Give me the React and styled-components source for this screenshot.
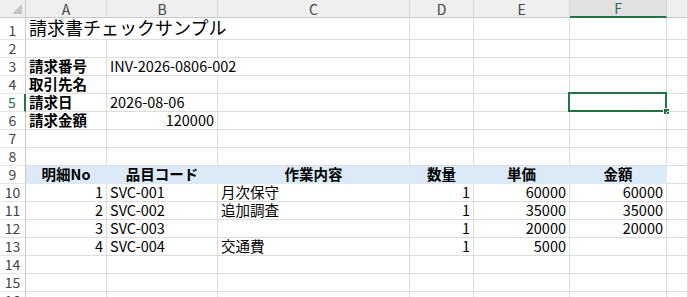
import React from 'react'
import styled, { createGlobalStyle, css } from 'styled-components'

const GlobalStyle = createGlobalStyle`
  html, body {
    margin: 0;
    padding: 0;
    background: #fff;
    overflow: hidden;
  }
  body {
    font-family: "Noto Sans CJK JP", "Noto Sans", sans-serif;
  }
`

const GREEN = '#217346'
const GRID = '#dcdcdc'

const columns = ['A', 'B', 'C', 'D', 'E', 'F', '']
const activeCol = 'F'
const activeRow = 5

// each row: height + cells for A..G, { t: text, r: right, c: center, b: bold, span, big }
const rows = [
  { n: 1, h: 22, cells: [{ t: '請求書チェックサンプル', span: 3, big: true }] },
  { n: 2 },
  { n: 3, cells: [{ t: '請求番号', b: true }, { t: 'INV-2026-0806-002', span: 2 }] },
  { n: 4, cells: [{ t: '取引先名', b: true }] },
  { n: 5, cells: [{ t: '請求日', b: true }, { t: '2026-08-06' }] },
  { n: 6, cells: [{ t: '請求金額', b: true }, { t: '120000', r: true }] },
  { n: 7 },
  { n: 8 },
  {
    n: 9,
    fill: true,
    cells: ['明細No', '品目コード', '作業内容', '数量', '単価', '金額'].map((t) => ({ t, c: true, b: true })),
  },
  { n: 10, cells: [{ t: '1', r: true }, { t: 'SVC-001' }, { t: '月次保守' }, { t: '1', r: true }, { t: '60000', r: true }, { t: '60000', r: true }] },
  { n: 11, cells: [{ t: '2', r: true }, { t: 'SVC-002' }, { t: '追加調査' }, { t: '1', r: true }, { t: '35000', r: true }, { t: '35000', r: true }] },
  { n: 12, cells: [{ t: '3', r: true }, { t: 'SVC-003' }, { t: '' }, { t: '1', r: true }, { t: '20000', r: true }, { t: '20000', r: true }] },
  { n: 13, cells: [{ t: '4', r: true }, { t: 'SVC-004' }, { t: '交通費' }, { t: '1', r: true }, { t: '5000', r: true }, { t: '' }] },
  { n: 14 },
  { n: 15 },
  { n: 16 },
]

const Sheet = styled.div`
  display: grid;
  grid-template-columns: 26px 81px 111px 192px 64px 96px 97px 21px;
  grid-auto-rows: 18px;
  width: 688px;
  height: 297px;
  overflow: hidden;
  background: #fff;
`

const Corner = styled.div`
  position: relative;
  background: #efefef;
  border-right: 1px solid #c8c8c8;
  border-bottom: 1px solid #c8c8c8;
  box-sizing: border-box;

  &::after {
    content: '';
    position: absolute;
    right: 3px;
    bottom: 3px;
    width: 0;
    height: 0;
    border-left: 10px solid transparent;
    border-bottom: 10px solid #c4c4c4;
  }
`

const ColHead = styled.div`
  box-sizing: border-box;
  display: flex;
  align-items: center;
  justify-content: center;
  font-size: 14px;
  color: #444;
  background: #efefef;
  border-right: 1px solid #d6d6d6;
  border-bottom: 1px solid #c8c8c8;
  ${(p) =>
    p.$active &&
    css`
      background: #e1e1e1;
      color: ${GREEN};
      border-bottom: 2px solid ${GREEN};
    `}
`

const RowHead = styled.div`
  box-sizing: border-box;
  display: flex;
  align-items: flex-end;
  justify-content: center;
  padding-bottom: 1px;
  font-size: 14px;
  line-height: 16px;
  color: #444;
  background: #fff;
  border-right: 1px solid #c8c8c8;
  border-bottom: 1px solid #e4e4e4;
  ${(p) =>
    p.$active &&
    css`
      color: ${GREEN};
      border-right: 2px solid ${GREEN};
    `}
`

const Cell = styled.div`
  position: relative;
  box-sizing: border-box;
  display: flex;
  align-items: flex-end;
  justify-content: ${(p) => (p.$right ? 'flex-end' : p.$center ? 'center' : 'flex-start')};
  grid-column: span ${(p) => p.$span || 1};
  padding: 0 3px 1px 3px;
  font-size: ${(p) => (p.$big ? '18px' : '14.5px')};
  line-height: ${(p) => (p.$big ? '21px' : '16px')};
  font-weight: ${(p) => (p.$bold ? 700 : 400)};
  color: #000;
  white-space: nowrap;
  background: ${(p) => (p.$fill ? '#dbeaf6' : 'transparent')};
  border-right: 1px solid ${(p) => (p.$fill ? '#dbeaf6' : GRID)};
  border-bottom: 1px solid ${(p) => (p.$fill ? '#dbeaf6' : GRID)};
`

const Selection = styled.div`
  position: absolute;
  left: -2px;
  top: -2px;
  right: -1px;
  bottom: -1px;
  border: 2px solid ${GREEN};
  pointer-events: none;

  &::after {
    content: '';
    position: absolute;
    right: -4px;
    bottom: -4px;
    width: 5px;
    height: 5px;
    background: ${GREEN};
    border-left: 1px solid #fff;
    border-top: 1px solid #fff;
  }
`

const SheetRow = ({ row }) => {
  const cells = []
  const defs = row.cells || []
  let i = 0
  let col = 0
  while (col < columns.length) {
    const d = defs[i] || {}
    const span = d.span || 1
    const letter = columns[col]
    const fill = row.fill && letter !== ''
    cells.push(
      <Cell
        key={col}
        $span={span}
        $right={d.r}
        $center={d.c}
        $bold={d.b}
        $big={d.big}
        $fill={fill}
        style={row.h ? { height: row.h } : undefined}
      >
        {d.t}
        {row.n === activeRow && letter === activeCol && <Selection />}
      </Cell>
    )
    col += span
    i++
  }
  return (
    <>
      <RowHead $active={row.n === activeRow} style={row.h ? { height: row.h } : undefined}>
        {row.n}
      </RowHead>
      {cells}
    </>
  )
}

const App = () => {
  return (
    <>
      <GlobalStyle />
      <Sheet style={{ gridTemplateRows: `18px ${rows.map((r) => (r.h || 18) + 'px').join(' ')}` }}>
        <Corner />
        {columns.map((c, i) => (
          <ColHead key={i} $active={c === activeCol}>
            {c}
          </ColHead>
        ))}
        {rows.map((r) => (
          <SheetRow key={r.n} row={r} />
        ))}
      </Sheet>
    </>
  )
}

export default App
